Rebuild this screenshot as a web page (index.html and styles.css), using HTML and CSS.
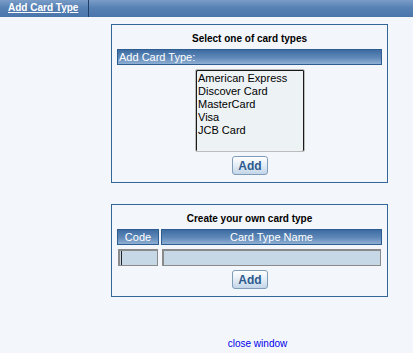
FILE: index.html
```html
<!DOCTYPE html>
<html lang="en">
<head>
    <meta charset="UTF-8">
    <title>Add Card Type</title>
    <link rel="stylesheet" href="styles.css">
</head>
<body>
    <div class="top-bar">
        <a class="top-tab" href="#">Add Card Type</a>
    </div>

    <div class="content">
        <div class="panel panel-select">
            <div class="panel-title">Select one of card types</div>
            <div class="bar bar-left">Add Card Type:</div>
            <div class="list-row">
                <select class="card-list" multiple size="6">
                    <option>American Express</option>
                    <option>Discover Card</option>
                    <option>MasterCard</option>
                    <option>Visa</option>
                    <option>JCB Card</option>
                </select>
            </div>
            <div class="btn-row"><button class="btn">Add</button></div>
        </div>

        <div class="panel panel-create">
            <div class="panel-title">Create your own card type</div>
            <div class="grid">
                <div class="bar">Code</div>
                <div class="bar">Card Type Name</div>
                <input class="field field-code" type="text">
                <input class="field" type="text">
            </div>
            <div class="btn-row"><button class="btn">Add</button></div>
        </div>

        <div class="footer"><a href="#" class="close-link">close window</a></div>
    </div>
</body>
</html>
```

FILE: styles.css
```css
body {
    margin: 0;
    background-color: #f3f6fa;
    font-family: "Liberation Sans", Arial, sans-serif;
    font-size: 11px;
}

.top-bar {
    height: 17px;
    background: linear-gradient(#7b9dc8, #5781b4 45%, #4a75ab);
    display: flex;
    align-items: center;
}

.top-tab {
    display: block;
    box-sizing: border-box;
    width: 89px;
    height: 17px;
    line-height: 16px;
    padding-left: 8px;
    white-space: nowrap;
    border-right: 1px solid #1f3f66;
    color: #fff;
    font-weight: bold;
    font-size: 10px;
    text-decoration: underline;
}

.content {
    padding: 7px 0 0 111px;
    width: 277px;
}

.panel {
    border: 1px solid #336699;
    padding: 0 5px;
}

.panel-select {
    height: 157px;
}

.panel-create {
    margin-top: 21px;
    height: 91px;
}

.panel-title {
    text-align: center;
    font-weight: bold;
    font-size: 10px;
    height: 24px;
    line-height: 28px;
    color: #000;
}

.bar {
    height: 14px;
    line-height: 14px;
    border: 1px solid #2d5d91;
    background: linear-gradient(#3d6ca2, #5f88b8 55%, #90b0d4);
    color: #fff;
    text-align: center;
}

.bar-left {
    text-align: left;
    padding-left: 1px;
}

.list-row {
    display: flex;
    justify-content: center;
    padding-top: 4px;
    margin-left: 1px;
}

.card-list {
    box-sizing: border-box;
    width: 110px;
    height: 83px;
    margin: 0;
    padding: 2px 0 0 1px;
    border: 1px solid #bcbcbc;
    box-shadow: inset 1px 1px 0 #1a1a1a, inset -1px 0 0 #1a1a1a;
    background: #edf2f5;
    font-family: "Liberation Sans", Arial, sans-serif;
    font-size: 11px;
    color: #000;
    overflow: hidden;
}

.card-list option {
    padding: 0 1px;
    min-height: 0;
    height: 13px;
    line-height: 13px;
}

.btn-row {
    display: flex;
    justify-content: center;
    padding-top: 4px;
    margin-left: 1px;
}

.btn {
    width: 36px;
    height: 19px;
    padding: 0;
    border: 1px solid #7f9db9;
    border-radius: 3px;
    background: linear-gradient(#ffffff, #e4edf6 50%, #c3d5e8);
    color: #2c5a8e;
    font-family: "Liberation Sans", Arial, sans-serif;
    font-weight: bold;
    font-size: 12px;
}

.grid {
    display: grid;
    grid-template-columns: 42px 1fr;
    column-gap: 2px;
    row-gap: 4px;
}

.field {
    box-sizing: border-box;
    height: 17px;
    margin: 0 1px;
    border: 2px solid #8a8a8a;
    border-width: 2px 1px 1px 2px;
    background: #c6d8e6;
    padding: 0 2px;
    font-size: 11px;
    outline: none;
}

.field-code {
    box-shadow: inset 1px 0 0 #c6d8e6, inset 2px 0 0 #222;
}

.footer {
    text-align: center;
    padding: 40px 0 0 16px;
}

.close-link {
    color: #0000ee;
    text-decoration: none;
    font-size: 10px;
}
```
